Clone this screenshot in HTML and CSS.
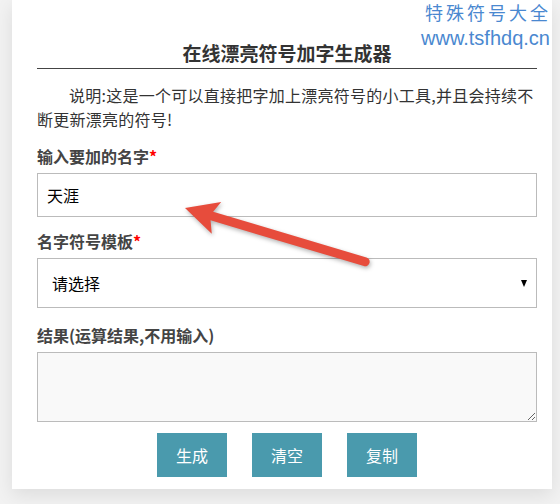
FILE: index.html
```html
<!DOCTYPE html>
<html>

<head>
    <meta charset="UTF-8">
    <meta name="viewport" content="width=device-width, initial-scale=1.0">
    <title>在线漂亮符号加字生成器</title>
    <link rel="stylesheet" href="styles.css">
</head>

<body>
    <div class="page">
        <div class="card">
            <h1 class="title">在线漂亮符号加字生成器</h1>
            <p class="intro">说明:这是一个可以直接把字加上漂亮符号的小工具,并且会持续不断更新漂亮的符号!</p>

            <div class="field">
                <label for="name">输入要加的名字<span class="req">*</span></label>
                <input type="text" id="name" class="text-input" value="天涯">
            </div>
            <div class="field field-select">
                <label for="tpl">名字符号模板<span class="req">*</span></label>
                <div class="select-wrap">
                    <select id="tpl">
                        <option>请选择</option>
                    </select>
                </div>
            </div>
            <div class="field">
                <label for="result">结果(运算结果,不用输入)</label>
                <textarea id="result"></textarea>
            </div>

            <div class="actions">
                <button>生成</button>
                <button>清空</button>
                <button>复制</button>
            </div>
        </div>

        <!-- 水印 -->
        <div class="watermark">
            <div class="wm-cn">特殊符号大全</div>
            <div class="wm-url">www.tsfhdq.cn</div>
        </div>

        <!-- 红色箭头 -->
        <svg class="arrow" width="560" height="504" viewBox="0 0 560 504">
            <g transform="translate(185 208) rotate(16.6)">
                <path d="M0 0 L33 -16 L28 -4.5 L188 -4.5 A4.5 4.5 0 0 1 188 4.5 L28 4.5 L33 17 Z" fill="#e74c3c" />
            </g>
        </svg>
    </div>
</body>
</html>
```

FILE: styles.css
```css
* {
    box-sizing: border-box;
}

body {
    margin: 0;
    background: #f2f2f2;
    font-family: "Microsoft YaHei", "Noto Sans CJK SC", sans-serif;
    color: #333;
}

.page {
    position: relative;
    width: 560px;
    height: 504px;
    overflow: hidden;
}

.card {
    margin: 0 8px 0 12px;
    padding: 40px 15px 12px 25px;
    background: #fff;
    box-shadow: 0 6px 18px rgba(0, 0, 0, 0.09);
}

.title {
    margin: 0;
    padding-bottom: 2px;
    font-size: 19px;
    line-height: 26px;
    font-weight: bold;
    text-align: center;
    color: #333;
    border-bottom: 1px solid #444;
}

.intro {
    margin: 14px 0 0;
    font-size: 16px;
    line-height: 24px;
    letter-spacing: 0.25px;
    text-indent: 2em;
    color: #333;
}

.field {
    margin-top: 12px;
}

.intro + .field {
    margin-top: 13px;
}

.field-select + .field {
    margin-top: 15px;
}

.field label {
    display: block;
    margin-bottom: 5px;
    font-size: 16px;
    line-height: 24px;
    font-weight: bold;
    color: #444;
}

.req {
    color: #f00;
}

.text-input,
.select-wrap select,
textarea {
    display: block;
    width: 100%;
    margin: 0;
    border: 1px solid #bbb;
    border-radius: 0;
    font-family: "Microsoft YaHei", "Noto Sans CJK SC", sans-serif;
    font-size: 16px;
    color: #000;
    background: #fff;
    outline: none;
}

.text-input {
    height: 44px;
    padding: 0 9px;
}

.select-wrap {
    position: relative;
}

.select-wrap select {
    height: 50px;
    padding: 0 14px;
    appearance: none;
    -webkit-appearance: none;
}

.select-wrap::after {
    content: "";
    position: absolute;
    right: 10px;
    top: 22px;
    border-left: 3px solid transparent;
    border-right: 3px solid transparent;
    border-top: 7px solid #000;
}

textarea {
    height: 70px;
    padding: 6px 9px;
    background: #f9f9f9;
    resize: vertical;
}

.actions {
    display: flex;
    justify-content: center;
    gap: 25px;
    margin-top: 11px;
}

.actions button {
    width: 70px;
    height: 44px;
    border: none;
    background: #4a9aad;
    color: #fff;
    font-family: "Microsoft YaHei", "Noto Sans CJK SC", sans-serif;
    font-size: 16px;
    cursor: pointer;
}

.actions button:hover {
    background: #3f8a9c;
}

.watermark {
    position: absolute;
    left: 421px;
    top: 0;
    color: #4a88d0;
}

.wm-cn {
    padding-left: 4px;
    font-family: "Noto Sans CJK SC", sans-serif;
    font-size: 18px;
    line-height: 24px;
    letter-spacing: 3px;
}

.wm-url {
    font-family: "Liberation Sans", Arial, sans-serif;
    font-size: 20px;
    line-height: 28px;
    white-space: nowrap;
}

.arrow {
    position: absolute;
    left: 0;
    top: 0;
    pointer-events: none;
    filter: drop-shadow(1px 2px 2px rgba(0, 0, 0, 0.3));
}
```
